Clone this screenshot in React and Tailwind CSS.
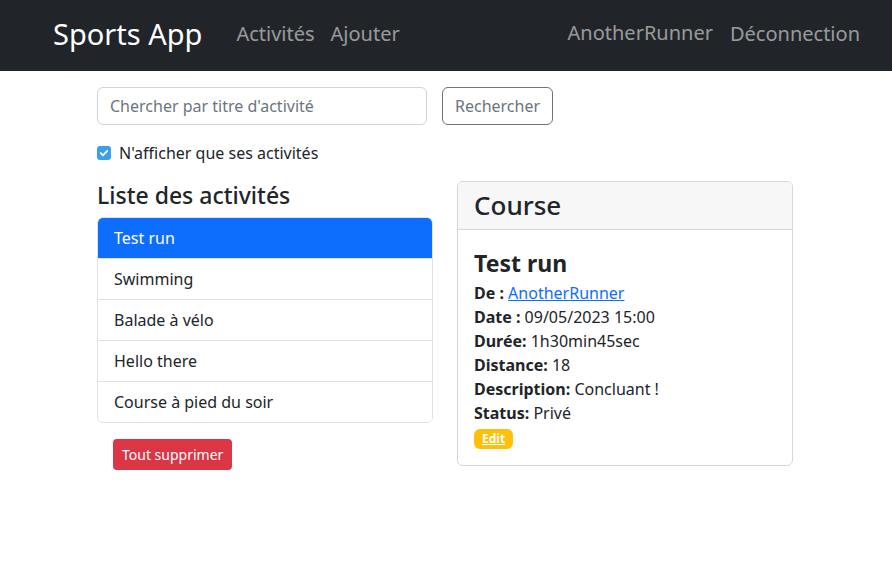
import React, { useState } from 'react';

const activities = ['Test run', 'Swimming', 'Balade à vélo', 'Hello there', 'Course à pied du soir'];

const App = () => {
  const [selected, setSelected] = useState(0);
  const [onlyMine, setOnlyMine] = useState(true);

  return (
    <div className="min-h-[565px] bg-white text-[#212529] font-['Noto_Sans',sans-serif] text-base">
      {/* Navbar */}
      <nav className="h-[71px] bg-[#212529] flex items-center pl-[53px] pr-[32px] pb-[4px]">
        <a className="text-[29px] leading-[35px] text-white mr-[34px] -mt-[1px]">Sports App</a>
        <div className="flex items-center gap-[16px] text-[20px] text-[rgba(255,255,255,0.55)]">
          <a>Activités</a>
          <a>Ajouter</a>
        </div>
        <div className="ml-auto flex items-center gap-[17px] text-[20px] text-[rgba(255,255,255,0.55)]">
          <a className="-mt-[2px]">AnotherRunner</a>
          <a>Déconnection</a>
        </div>
      </nav>

      <div className="w-[696px] ml-[97px]">
        {/* Search */}
        <div className="flex items-center gap-[15px] mt-[16px]">
          <input
            className="w-[330px] h-[38px] border border-[#ced4da] rounded-[6px] px-[12px] text-base text-[#212529] placeholder:text-[#6c757d] outline-none"
            placeholder="Chercher par titre d'activité"
          />
          <button className="h-[38px] px-[12px] border border-[#6c757d] rounded-[6px] text-[#6c757d] text-base">
            Rechercher
          </button>
        </div>

        <label className="flex items-center gap-[8px] mt-[16px] leading-[24px]">
          <span
            onClick={() => setOnlyMine(!onlyMine)}
            className={`w-[14px] h-[14px] rounded-[3px] flex items-center justify-center ${onlyMine ? 'bg-[#3b9fe9]' : 'border border-[#767676]'}`}
          >
            {onlyMine && (
              <svg width="10" height="10" viewBox="0 0 10 10">
                <path d="M1.8 5.2 L4 7.3 L8.2 2.8" stroke="white" strokeWidth="1.8" fill="none" strokeLinecap="round" strokeLinejoin="round" />
              </svg>
            )}
          </span>
          <span>N'afficher que ses activités</span>
        </label>

        {/* Columns */}
        <div className="grid grid-cols-2 gap-[24px] mt-[16px]">
          <div>
            <h4 className="text-[23px] leading-[28px] font-medium mb-[8px]">Liste des activités</h4>
            <ul className="border border-[#dee2e6] rounded-[6px] overflow-hidden">
              {activities.map((a, i) => (
                <li
                  key={a}
                  onClick={() => setSelected(i)}
                  className={`px-[16px] py-[8px] leading-[24px] ${i > 0 ? 'border-t border-[#dee2e6]' : ''} ${
                    selected === i ? 'bg-[#0d6efd] text-white' : 'bg-white'
                  }`}
                >
                  {a}
                </li>
              ))}
            </ul>
            <button className="mt-[16px] ml-[16px] h-[31px] px-[9px] bg-[#dc3545] text-white text-[14px] rounded-[4px]">
              Tout supprimer
            </button>
          </div>

          <div className="self-start border border-[#d6d6d6] rounded-[6px] overflow-hidden">
            <div className="bg-[#f7f7f7] border-b border-[#d6d6d6] px-[16px] py-[8px]">
              <h3 className="text-[26px] leading-[31px] font-medium">Course</h3>
            </div>
            <div className="p-[16px] leading-[24px]">
              <h4 className="text-[23px] leading-[28px] font-bold mb-[4px] pt-[3px]">Test run</h4>
              <div><b>De :</b> <a className="text-[#0d6efd] underline">AnotherRunner</a></div>
              <div><b>Date :</b> 09/05/2023 15:00</div>
              <div><b>Durée:</b> 1h30min45sec</div>
              <div><b>Distance:</b> 18</div>
              <div><b>Description:</b> Concluant !</div>
              <div><b>Status:</b> Privé</div>
              <div className="pt-[4px] flex">
                <span className="h-[20px] px-[8px] bg-[#ffc107] text-white text-[12px] leading-[20px] font-bold underline rounded-[6px]">
                  Edit
                </span>
              </div>
            </div>
          </div>
        </div>
      </div>
    </div>
  );
};

export default App;
